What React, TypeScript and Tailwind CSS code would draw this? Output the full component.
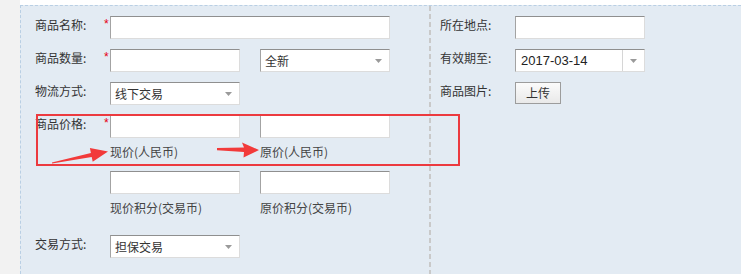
import React from "react";

const fieldBorder =
  "border border-t-[#8f8f8f] border-l-[#a3a3a3] border-r-[#dcdcdc] border-b-[#dcdcdc] bg-white";

const Caret = () => (
  <svg width="7" height="4" viewBox="0 0 7 4" className="shrink-0">
    <path d="M0 0h7L3.5 4z" fill="#9a9a9a" />
  </svg>
);

const TextBox = ({ w = "w-[130px]" }: { w?: string }) => (
  <div className={`h-[23px] ${w} ${fieldBorder}`} />
);

const SelectBox = ({ value }: { value: string }) => (
  <div
    className={`flex h-[23px] w-[130px] items-center justify-between pl-[4px] pr-[7px] leading-[16px] ${fieldBorder}`}
  >
    <span>{value}</span>
    <Caret />
  </div>
);

const Label = ({ text, w = "w-[69px]" }: { text: string; w?: string }) => (
  <div className={`${w} shrink-0 pt-[1px] leading-[16px]`}>{text}</div>
);

const Star = ({ show = true }: { show?: boolean }) => (
  <div className="w-[6px] shrink-0 pt-[1px] font-['Liberation_Sans',sans-serif] text-[12px] leading-[14px] text-[#e60012]">
    {show ? "*" : ""}
  </div>
);

const PairWithCaptions = ({ left, right }: { left: string; right: string }) => (
  <div className="flex gap-[20px]">
    <div className="flex w-[130px] flex-col">
      <TextBox />
      <div className="mt-[6px] leading-[16px] text-[#444]">{left}</div>
    </div>
    <div className="flex w-[130px] flex-col">
      <TextBox />
      <div className="mt-[6px] leading-[16px] text-[#444]">{right}</div>
    </div>
  </div>
);

export default function App() {
  return (
    <div className="relative flex h-[274px] w-[741px] overflow-hidden bg-white font-['Noto_Sans_CJK_SC',sans-serif] text-[12px] text-[#333]">
      {/* page gutter */}
      <div className="w-[20px] shrink-0 bg-[#f2f2f2]" />

      <div className="flex flex-1 flex-col pt-[5px]">
        <div className="flex flex-1 border-l border-t border-dashed border-[#b9cfe4] bg-[#e3ebf3]">
          {/* left column */}
          <div className="flex w-[408px] shrink-0 flex-col pl-[14px] pt-[10px]">
            <div className="flex items-start">
              <Label text="商品名称:" />
              <Star />
              <TextBox w="w-[280px]" />
            </div>

            <div className="mt-[10px] flex items-start">
              <Label text="商品数量:" />
              <Star />
              <div className="flex gap-[20px]">
                <TextBox />
                <SelectBox value="全新" />
              </div>
            </div>

            <div className="mt-[10px] flex items-start">
              <Label text="物流方式:" />
              <Star show={false} />
              <SelectBox value="线下交易" />
            </div>

            <div className="mt-[10px] flex items-start">
              <Label text="商品价格:" />
              <Star />
              <PairWithCaptions left="现价(人民币)" right="原价(人民币)" />
            </div>

            <div className="mt-[11px] flex items-start">
              <Label text="" />
              <Star show={false} />
              <PairWithCaptions left="现价积分(交易币)" right="原价积分(交易币)" />
            </div>

            <div className="mt-[19px] flex items-start">
              <Label text="交易方式:" />
              <Star show={false} />
              <SelectBox value="担保交易" />
            </div>
          </div>

          {/* column divider */}
          <div className="w-[2px] shrink-0 bg-[repeating-linear-gradient(to_bottom,#c9c9c9_0_5px,transparent_5px_8px)]" />

          {/* right column */}
          <div className="flex flex-1 flex-col pl-[9px] pt-[10px]">
            <div className="flex items-start">
              <Label text="所在地点:" w="w-[75px]" />
              <TextBox />
            </div>

            <div className="mt-[10px] flex items-start">
              <Label text="有效期至:" w="w-[75px]" />
              <div className={`flex h-[23px] w-[130px] items-stretch ${fieldBorder}`}>
                <div className="flex flex-1 items-center pl-[5px] font-['Liberation_Sans',sans-serif] text-[13px] text-[#222]">
                  2017-03-14
                </div>
                <div className="flex w-[22px] items-center justify-center border-l border-[#d6d6d6]">
                  <Caret />
                </div>
              </div>
            </div>

            <div className="mt-[10px] flex items-start">
              <Label text="商品图片:" w="w-[75px]" />
              <button className="h-[22px] w-[46px] border border-[#9c9c9c] bg-[linear-gradient(to_bottom,#fbfbfb,#e9e9e9)] leading-[16px] text-[#333]">
                上传
              </button>
            </div>
          </div>
        </div>
      </div>

      {/* annotation: red box and arrows drawn over the form */}
      <svg
        className="pointer-events-none absolute left-0 top-0"
        width="741"
        height="274"
        viewBox="0 0 741 274"
      >
        <rect x="37" y="115" width="422" height="50" fill="none" stroke="#ec3a3f" strokeWidth="2" />
        <polygon
          points="51.9,162.4 90.9,152.9 89.9,148 108,151.5 92.7,161.8 91.7,156.9 52.1,163.6"
          fill="#f23a3a"
        />
        <polygon
          points="217,148 244,147.6 242,142.5 259,150 243.5,157.5 244,152 217,150.2"
          fill="#f23a3a"
        />
      </svg>
    </div>
  );
}
